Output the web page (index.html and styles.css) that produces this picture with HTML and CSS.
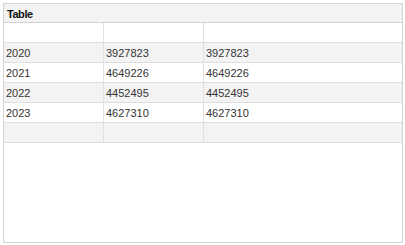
FILE: index.html
```html
<!DOCTYPE html>
<html>
<head>
<meta charset="utf-8">
<link rel="stylesheet" href="styles.css">
</head>
<body>
<div class="panel">
  <div class="title">Table</div>
  <div class="grid">
    <div class="row"><div class="cell"></div><div class="cell"></div><div class="cell"></div></div>
    <div class="row alt"><div class="cell">2020</div><div class="cell">3927823</div><div class="cell">3927823</div></div>
    <div class="row"><div class="cell">2021</div><div class="cell">4649226</div><div class="cell">4649226</div></div>
    <div class="row alt"><div class="cell">2022</div><div class="cell">4452495</div><div class="cell">4452495</div></div>
    <div class="row"><div class="cell">2023</div><div class="cell">4627310</div><div class="cell">4627310</div></div>
    <div class="row alt"><div class="cell"></div><div class="cell"></div><div class="cell"></div></div>
  </div>
</div>
</body>
</html>
```
FILE: styles.css
```css
* { box-sizing: border-box; }
html, body { margin: 0; padding: 0; background: #ffffff; }
body { padding: 3px 2px 2px 3px; font-family: "Liberation Sans", Arial, sans-serif; }
.panel {
  width: 400px;
  height: 240px;
  border: 1px solid #d4d4d4;
  background: #ffffff;
}
.title {
  height: 19px;
  background: #f3f3f3;
  border-bottom: 1px solid #d2d2d2;
  padding: 2px 3px 0;
  line-height: 16px;
  font-size: 11px;
  font-weight: bold;
  letter-spacing: -0.45px;
  color: #111111;
}
.row {
  display: grid;
  grid-template-columns: 100px 100px 1fr;
  height: 20px;
  border-bottom: 1px solid #dedede;
  background: #ffffff;
}
.row.alt { background: #f3f3f3; }
.cell {
  border-right: 1px solid #e0e0e0;
  padding: 0 2px;
  font-size: 11px;
  line-height: 19px;
  padding-top: 1px;
  color: #333333;
  white-space: nowrap;
  overflow: hidden;
}
.cell:last-child { border-right: none; }
```
